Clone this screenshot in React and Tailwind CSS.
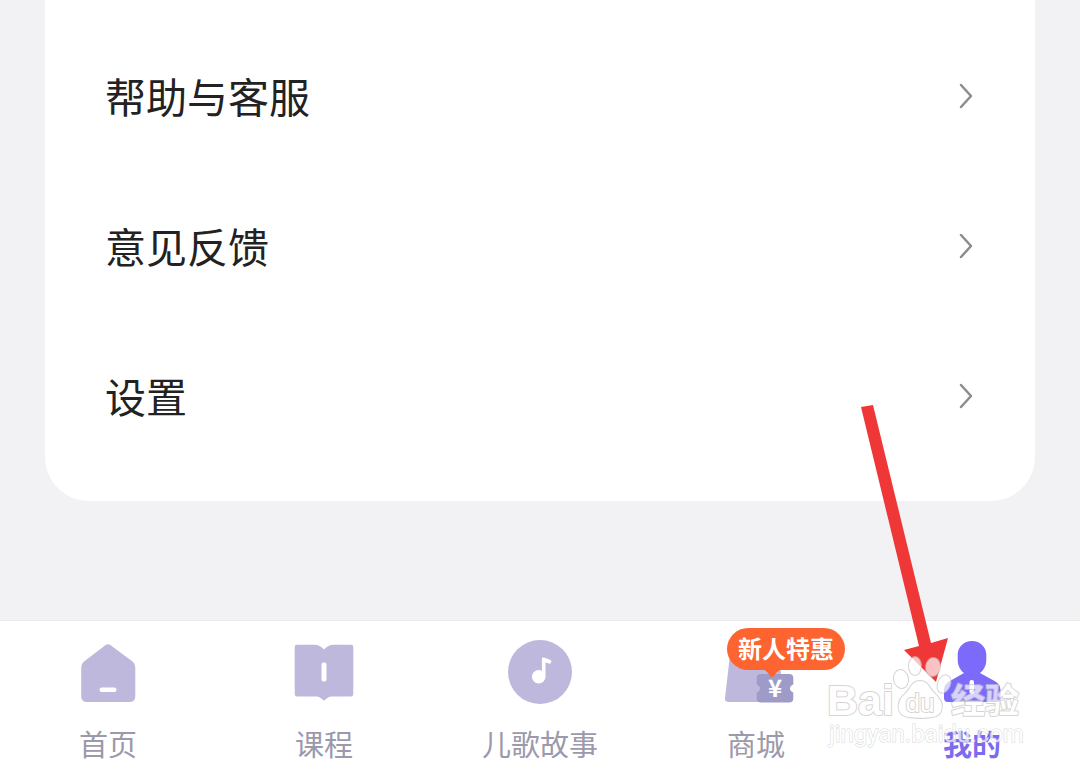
const rows = ["帮助与客服", "意见反馈", "设置"];

function HomeIcon() {
  return (
    <svg viewBox="0 0 64 64" className="size-16" aria-hidden="true">
      <path
        d="M29 5.4Q32 3.2 35 5.4L56.500 21.500Q59.300 23.800 59.300 27.500V56Q59.300 62 53.300 62H11.200Q5.200 62 5.200 56V27.500Q5.200 23.800 8 21.500Z"
        fill="#bdb8dc"
      />
      <rect x="23.500" y="47.500" width="17" height="4.500" rx="2.200" fill="#fff" />
    </svg>
  );
}

function BookIcon() {
  return (
    <svg viewBox="0 0 64 64" className="size-16" aria-hidden="true">
      <path
        d="M5 4.700H22Q28 4.700 32 9.500Q36 4.700 42 4.700H59Q61.300 4.700 61.300 7V54Q61.300 56.500 59 56.500H39Q36.500 56.500 34 59L32 60.800L30 59Q27.500 56.500 25 56.500H5Q2.700 56.500 2.700 54V7Q2.700 4.700 5 4.700Z"
        fill="#bdb8dc"
      />
      <rect x="29.500" y="22.500" width="5" height="19" rx="2" fill="#fff" />
    </svg>
  );
}

function MusicIcon() {
  return (
    <svg viewBox="0 0 64 64" className="size-16" aria-hidden="true">
      <circle cx="32" cy="32" r="32" fill="#bdb8dc" />
      <circle cx="30.700" cy="36.700" r="6.800" fill="#fff" />
      <path
        d="M33.900 36V18.800Q34 17 36 17.600L42 19.800Q43.900 20.600 43.300 22.300Q42.600 23.900 41 23.600L37.500 22.600V37Z"
        fill="#fff"
      />
    </svg>
  );
}

function ShopIcon() {
  return (
    <svg viewBox="0 0 64 64" className="size-16 overflow-visible" aria-hidden="true">
      <path d="M10 10H50Q54 10 55 15L60 62H4.500Q.5 62 1 58L6 15Q6.500 10 10 10Z" fill="#bdb8dc" />
      <path
        d="M37 34H65Q69.300 34 69.300 38V44.500Q66 46 66 48.500Q66 51 69.300 52.500V58.500Q69.300 62.500 65 62.500H37Q32.700 62.500 32.700 58.500V52.500Q36 51 36 48.500Q36 46 32.700 44.500V38Q32.700 34 37 34Z"
        fill="#9f9bc9"
      />
      <text
        x="51"
        y="57"
        textAnchor="middle"
        fill="#fff"
        className="font-['Noto_Sans_CJK_SC',sans-serif] text-[24px] font-bold"
      >
        ¥
      </text>
    </svg>
  );
}

function UserIcon() {
  return (
    <svg viewBox="0 0 64 64" className="size-16" aria-hidden="true">
      <path
        d="M32 1C40 1 46.300 7 46.300 14.500V20C46.300 26 43.500 30.500 40 33L55.500 41.500Q60.500 44.500 60.500 50V58Q60.500 62 56.500 62H8Q4 62 4 58V50Q4 44.500 9 41.500L24 33C20.500 30.500 17.700 26 17.700 20V14.500C17.700 7 24 1 32 1Z"
        fill="#7c6bfb"
      />
      <rect x="29.500" y="40" width="4.500" height="14" rx="2" fill="#fff" />
    </svg>
  );
}

const tabs = [
  { label: "首页", Icon: HomeIcon },
  { label: "课程", Icon: BookIcon },
  { label: "儿歌故事", Icon: MusicIcon },
  { label: "商城", Icon: ShopIcon, badge: "新人特惠" },
  { label: "我的", Icon: UserIcon, active: true },
];

function Badge({ text }) {
  return (
    <span className="absolute top-[7px] left-1/2 -ml-[29px] flex h-[42px] w-[118px] items-center justify-center rounded-full bg-[#fe6430] pb-0.5 text-2xl font-bold whitespace-nowrap text-white">
      {text}
      <svg viewBox="0 0 24 9" className="absolute top-[41px] left-[33px] h-[9px] w-6" aria-hidden="true">
        <path d="M0 0H24Q19 .5 16 4L14 7Q12 9 10 7L8 4Q5 .5 0 0Z" fill="#fe6430" />
      </svg>
    </span>
  );
}

function Arrow() {
  return (
    <svg
      viewBox="0 0 88 280"
      className="pointer-events-none absolute right-[132px] bottom-[87px] h-[280px] w-[88px]"
      aria-hidden="true"
    >
      <path d="M1 3L13 1L71 239L88 234L76 278L44 246L59 242Z" fill="#ef3737" />
    </svg>
  );
}

function Watermark() {
  return (
    <div className="pointer-events-none absolute right-[58px] bottom-[20px] h-[96px] w-[194px] opacity-70" aria-hidden="true">
      <svg viewBox="0 0 194 96" className="h-full w-full overflow-visible">
        <g fill="#fff" stroke="#c4c4c4" strokeWidth="2" paintOrder="stroke" strokeLinejoin="round">
          <text x="-1" y="60" className="font-['Liberation_Sans',sans-serif] text-[43px] font-bold">
            Bai
          </text>
          <ellipse cx="73" cy="24" rx="7" ry="9" transform="rotate(-12 73 24)" />
          <ellipse cx="87" cy="11" rx="6" ry="9" />
          <ellipse cx="105" cy="12" rx="7" ry="9" transform="rotate(8 105 12)" />
          <ellipse cx="116" cy="29" rx="6" ry="9" transform="rotate(22 116 29)" />
          <path d="M92 26C100 26 101 33 107 39C116 46 117 61 104 62C98 63 87 63 81 62C68 61 68 46 77 39C83 33 84 26 92 26Z" />
          <text
            x="92"
            y="57"
            textAnchor="middle"
            className="font-['Liberation_Sans',sans-serif] text-[26px]"
          >
            du
          </text>
          <text x="123" y="58" className="font-['Noto_Sans_CJK_SC',sans-serif] text-[34px] font-bold">
            经验
          </text>
          <text x="1" y="87" strokeWidth="1" className="font-['Roboto',sans-serif] text-[24px]">
            jingyan.baidu.com
          </text>
        </g>
      </svg>
    </div>
  );
}

function App() {
  return (
    <div className="flex min-h-screen flex-col justify-between bg-[#f2f2f5] font-['Noto_Sans_CJK_SC',sans-serif]">
      <main className="mx-[45px] rounded-b-[44px] bg-white pt-[21px] pb-[30px]">
        {rows.map((row) => (
          <button
            key={row}
            type="button"
            className="flex h-[150px] w-full items-center justify-between px-[60px] text-[41px] text-[#222]"
          >
            {row}
            <svg viewBox="0 0 18 28" className="h-7 w-[18px]" fill="none" aria-hidden="true">
              <path
                d="M4 3L14 14L4 25"
                stroke="#8c8c8c"
                strokeWidth="2.500"
                strokeLinecap="round"
                strokeLinejoin="round"
              />
            </svg>
          </button>
        ))}
      </main>

      <nav className="relative grid h-[151px] grid-cols-5 border-t border-[#ebebed] bg-white">
        {tabs.map(({ label, Icon, badge, active }) => (
          <a key={label} href="#" className="relative flex flex-col items-center gap-[18px] pt-[19px]">
            <Icon />
            {badge && <Badge text={badge} />}
            <span
              className={
                active
                  ? "text-[29px] leading-[42px] font-bold text-[#7c6bf0]"
                  : "text-[29px] leading-[42px] text-[#9b99ab]"
              }
            >
              {label}
            </span>
          </a>
        ))}
        <Arrow />
        <Watermark />
      </nav>
    </div>
  );
}

export default App;
